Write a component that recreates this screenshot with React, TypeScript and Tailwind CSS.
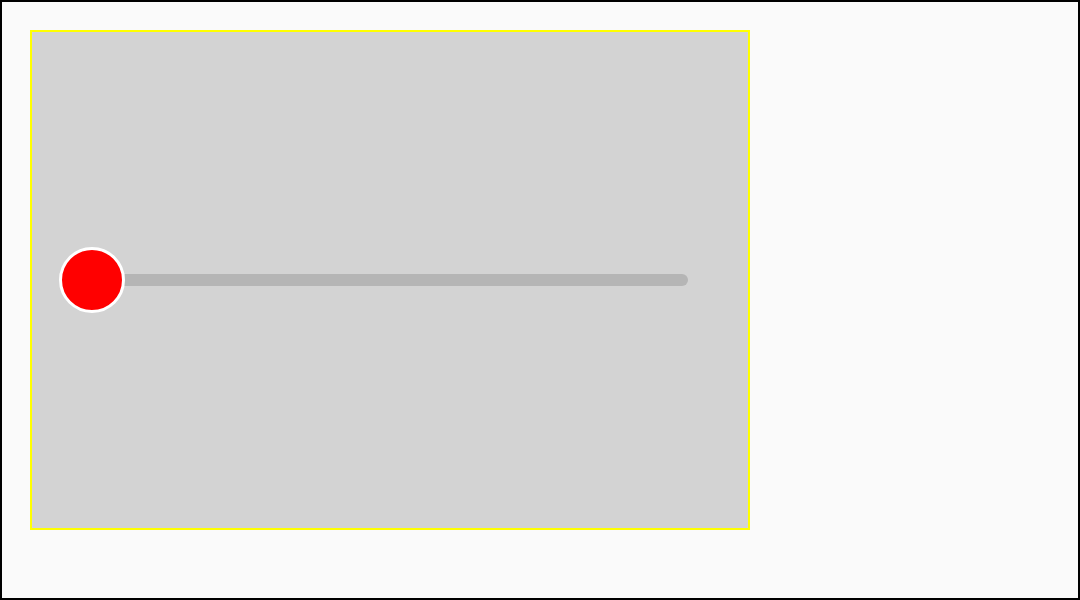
export default function App() {
  return (
    <div className="w-[1080px] h-[600px] border-2 border-black bg-[#fafafa] p-[28px]">
      <div className="w-[720px] h-[500px] border-2 border-[#ffff00] bg-[#d3d3d3] flex items-center">
        {/* slider */}
        <div className="relative ml-[28px] w-[628px] h-3 rounded-full bg-[#b5b5b5]">
          <div className="absolute left-[-1px] top-1/2 -translate-y-1/2 w-[66px] h-[66px] rounded-full bg-[#ff0000] border-[3px] border-white" />
        </div>
      </div>
    </div>
  );
}
